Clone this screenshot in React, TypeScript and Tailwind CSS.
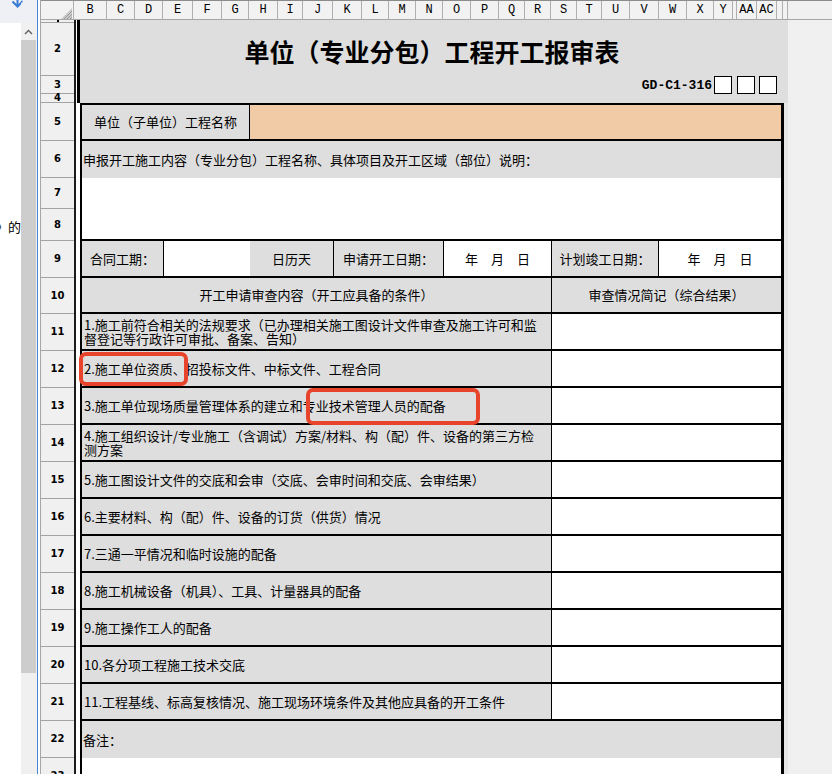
const columns: { label: string; w: string }[] = [
  { label: 'B', w: 'w-[33px]' },
  { label: 'C', w: 'w-[28px]' },
  { label: 'D', w: 'w-[28px]' },
  { label: 'E', w: 'w-[30px]' },
  { label: 'F', w: 'w-[29px]' },
  { label: 'G', w: 'w-[27px]' },
  { label: 'H', w: 'w-[29px]' },
  { label: 'I', w: 'w-[25px]' },
  { label: 'J', w: 'w-[30px]' },
  { label: 'K', w: 'w-[29px]' },
  { label: 'L', w: 'w-[27px]' },
  { label: 'M', w: 'w-[27px]' },
  { label: 'N', w: 'w-[27px]' },
  { label: 'O', w: 'w-[28px]' },
  { label: 'P', w: 'w-[28px]' },
  { label: 'Q', w: 'w-[26px]' },
  { label: 'R', w: 'w-[26px]' },
  { label: 'S', w: 'w-[26px]' },
  { label: 'T', w: 'w-[25px]' },
  { label: 'U', w: 'w-[28px]' },
  { label: 'V', w: 'w-[29px]' },
  { label: 'W', w: 'w-[28px]' },
  { label: 'X', w: 'w-[27px]' },
  { label: 'Y', w: 'w-[19px]' },
  { label: '', w: 'w-[4px]' },
  { label: 'AA', w: 'w-[20px]' },
  { label: 'AC', w: 'w-[20px]' },
  { label: '', w: 'w-[6px]' },
  { label: '', w: 'w-[5px]' },
];

const rowHeads: { label: string; h: string }[] = [
  { label: '1', h: 'h-[3px]' },
  { label: '2', h: 'h-[53px]' },
  { label: '3', h: 'h-[18px]' },
  { label: '4', h: 'h-[9px]' },
  { label: '5', h: 'h-[38px]' },
  { label: '6', h: 'h-[37px]' },
  { label: '7', h: 'h-[31px]' },
  { label: '8', h: 'h-[32px]' },
  { label: '9', h: 'h-[37px]' },
  { label: '10', h: 'h-[36px]' },
  { label: '11', h: 'h-[37px]' },
  { label: '12', h: 'h-[37px]' },
  { label: '13', h: 'h-[37px]' },
  { label: '14', h: 'h-[37px]' },
  { label: '15', h: 'h-[37px]' },
  { label: '16', h: 'h-[37px]' },
  { label: '17', h: 'h-[37px]' },
  { label: '18', h: 'h-[37px]' },
  { label: '19', h: 'h-[37px]' },
  { label: '20', h: 'h-[37px]' },
  { label: '21', h: 'h-[37px]' },
  { label: '22', h: 'h-[37px]' },
  { label: '23', h: 'h-[37px]' },
];

// 开工条件检查项，数组里每一项是一行
const checklist: string[][] = [
  ['1.施工前符合相关的法规要求（已办理相关施工图设计文件审查及施工许可和监', '督登记等行政许可审批、备案、告知）'],
  ['2.施工单位资质、招投标文件、中标文件、工程合同'],
  ['3.施工单位现场质量管理体系的建立和专业技术管理人员的配备'],
  ['4.施工组织设计/专业施工（含调试）方案/材料、构（配）件、设备的第三方检', '测方案'],
  ['5.施工图设计文件的交底和会审（交底、会审时间和交底、会审结果）'],
  ['6.主要材料、构（配）件、设备的订货（供货）情况'],
  ['7.三通一平情况和临时设施的配备'],
  ['8.施工机械设备（机具）、工具、计量器具的配备'],
  ['9.施工操作工人的配备'],
  ['10.各分项工程施工技术交底'],
  ['11.工程基线、标高复核情况、施工现场环境条件及其他应具备的开工条件'],
];

// 左侧文档窗格（只露出一小截）
function DocPane() {
  return (
    <div className="w-[21px] shrink-0 flex flex-col bg-white overflow-hidden">
      <div className="h-[23px] shrink-0 bg-[#eef0f5]">
        <svg width="21" height="23" viewBox="0 0 21 23" fill="none">
          <path d="M17.5 -4 V6" stroke="#3a7bd5" strokeWidth="2" />
          <path d="M12.5 1.5 L17.5 6.5 L22.5 1.5" stroke="#3a7bd5" strokeWidth="2" />
        </svg>
      </div>
      <div className="mt-[197px] -ml-[5px] whitespace-nowrap text-[13px] leading-[14px] text-black">
        》的词
      </div>
    </div>
  );
}

function ScrollBar() {
  return (
    <div className="w-[16px] shrink-0 flex flex-col bg-[#f0f0f0]">
      <div className="h-[23px] shrink-0 bg-[#eef0f5] overflow-hidden">
        <svg width="16" height="23" viewBox="0 0 16 23" fill="none">
          <path d="M-4.5 1.5 L-3.5 2.5 L1.5 1.5" stroke="#3a7bd5" strokeWidth="2" />
        </svg>
      </div>
      <div className="h-[17px] shrink-0 flex items-center justify-center pr-[1px]">
        <svg width="9" height="6" viewBox="0 0 9 6" fill="none">
          <path d="M1 5 L4.5 1.5 L8 5" stroke="#606060" strokeWidth="1.4" />
        </svg>
      </div>
      <div className="h-[633px] shrink-0 mr-[1px] bg-[#cdcdcd]" />
    </div>
  );
}

function ColumnHeader() {
  return (
    <div className="h-[20px] shrink-0 flex border-y border-t-[#8c8c8c] border-b-[#a6a6a6] bg-[#f2f2f2] font-['Liberation_Mono',monospace] text-[12px] text-black">
      <div className="w-[33px] shrink-0 flex items-end justify-end border-r border-[#b0b0b0] pr-[1px]">
        <svg width="11" height="11" viewBox="0 0 11 11">
          <polygon points="11,0 11,11 0,11" fill="#c9c9c9" />
          <path d="M11 3 L3 11 M11 6 L6 11 M11 9 L9 11" stroke="#9c9c9c" strokeWidth="1" />
        </svg>
      </div>
      {columns.map((c, i) => (
        <div
          key={i}
          className={`${c.w} shrink-0 flex items-center justify-center overflow-hidden border-r border-[#b0b0b0] leading-none`}
        >
          {c.label}
        </div>
      ))}
      <div className="flex-1 bg-[#f0f0f0]" />
    </div>
  );
}

function RowHeader() {
  return (
    <div className="w-[35px] shrink-0 flex flex-col border-r-2 border-[#1c1c1c] bg-[#f0f0f0] font-['DejaVu_Sans',sans-serif] text-[10px] font-bold text-black">
      {rowHeads.map((r) => (
        <div
          key={r.label}
          className={`${r.h} shrink-0 flex items-center justify-center border-b border-[#a3a3a3] leading-none`}
        >
          {r.label === '1' ? <span className="w-[2px] h-[2px] bg-black" /> : r.label}
        </div>
      ))}
    </div>
  );
}

function TitleBlock() {
  return (
    <div className="h-[83px] shrink-0 flex flex-col border-l-[3px] border-black bg-[#dedede]">
      <div className="h-[56px] shrink-0 flex items-center justify-center pt-[6px] pr-[4px]">
        <h1 className="text-[25px] font-bold leading-none text-black">
          单位（专业分包）工程开工报审表
        </h1>
      </div>
      <div className="h-[18px] shrink-0 flex items-center justify-end pr-[11px]">
        <span className="mr-[2px] font-['Liberation_Mono',monospace] text-[13px] font-bold leading-none text-black">
          GD-C1-316
        </span>
        <span className="w-[18px] h-[18px] border border-black bg-white" />
        <span className="ml-[5px] w-[18px] h-[18px] border border-black bg-white" />
        <span className="ml-[4px] w-[18px] h-[18px] border border-black bg-white" />
      </div>
      <div className="h-[9px] shrink-0" />
    </div>
  );
}

function FormTable() {
  return (
    <div className="w-[704px] shrink-0 flex flex-col border-l-2 border-t-2 border-r-[3px] border-black bg-white text-[13px] text-black">
      <div className="h-[36px] shrink-0 flex border-b-2 border-black">
        <div className="w-[168px] shrink-0 flex items-center justify-center border-r border-black bg-[#dedede]">
          单位（子单位）工程名称
        </div>
        <div className="flex-1 bg-[#f1caa6]" />
      </div>

      <div className="h-[37px] shrink-0 flex items-center bg-[#dedede] pl-[1px]">
        申报开工施工内容（专业分包）工程名称、具体项目及开工区域（部位）说明：
      </div>
      <div className="h-[63px] shrink-0 border-b-2 border-black" />

      <div className="h-[37px] shrink-0 flex border-b-2 border-black">
        <div className="w-[82px] shrink-0 flex items-center justify-center border-r border-black bg-[#dedede]">
          合同工期：
        </div>
        <div className="w-[86px] shrink-0" />
        <div className="w-[84px] shrink-0 flex items-center justify-center border-r border-black bg-[#dedede]">
          日历天
        </div>
        <div className="w-[110px] shrink-0 flex items-center justify-center border-r border-black bg-[#dedede]">
          申请开工日期：
        </div>
        <div className="w-[108px] shrink-0 flex items-center justify-center border-r border-black">
          年　月　日
        </div>
        <div className="w-[107px] shrink-0 flex items-center justify-center border-r border-black bg-[#dedede]">
          计划竣工日期：
        </div>
        <div className="flex-1 flex items-center justify-center">年　月　日</div>
      </div>

      <div className="h-[36px] shrink-0 flex border-b-2 border-black bg-[#dedede]">
        <div className="w-[470px] shrink-0 flex items-center justify-center border-r border-black">
          开工申请审查内容（开工应具备的条件）
        </div>
        <div className="flex-1 flex items-center justify-center">审查情况简记（综合结果）</div>
      </div>

      {checklist.map((lines, i) => (
        <div key={i} className="h-[37px] shrink-0 flex border-b-2 border-black">
          <div className="w-[470px] shrink-0 flex flex-col justify-center border-r border-black bg-[#dedede] pl-[2px] pt-[1px] leading-[14px] whitespace-nowrap">
            {lines.map((t) => (
              <span key={t}>{t}</span>
            ))}
          </div>
          <div className="flex-1" />
        </div>
      ))}

      <div className="h-[37px] shrink-0 flex items-center bg-[#dedede] pl-[1px]">备注：</div>
      <div className="flex-1" />
    </div>
  );
}

export default function App() {
  return (
    <div className="relative w-[832px] h-[774px] overflow-hidden flex bg-white font-['Noto_Sans_CJK_SC','Noto_Sans',sans-serif]">
      <DocPane />
      <ScrollBar />
      <div className="w-[1px] shrink-0 bg-[#4a86d8]" />
      <div className="w-[2px] shrink-0 bg-white" />

      <div className="flex-1 flex flex-col border-l border-[#a6a6a6]">
        <ColumnHeader />
        <div className="flex-1 flex overflow-hidden">
          <RowHeader />
          <div className="w-[1px] shrink-0 bg-white" />
          <div className="w-[711px] shrink-0 flex flex-col">
            <TitleBlock />
            <div className="flex-1 flex">
              <div className="w-[3px] shrink-0 bg-white" />
              <FormTable />
              <div className="w-[4px] shrink-0 bg-[#e6e6e6]" />
            </div>
          </div>
          <div className="flex-1 bg-[#f0f0f0]" />
        </div>
      </div>

      {/* 红色标注框 */}
      <div className="absolute left-[79px] top-[352px] w-[109px] h-[34px] rounded-[7px] border-4 border-[#e8432b]" />
      <div className="absolute left-[306px] top-[388px] w-[174px] h-[37px] rounded-[7px] border-4 border-[#e8432b]" />
    </div>
  );
}
